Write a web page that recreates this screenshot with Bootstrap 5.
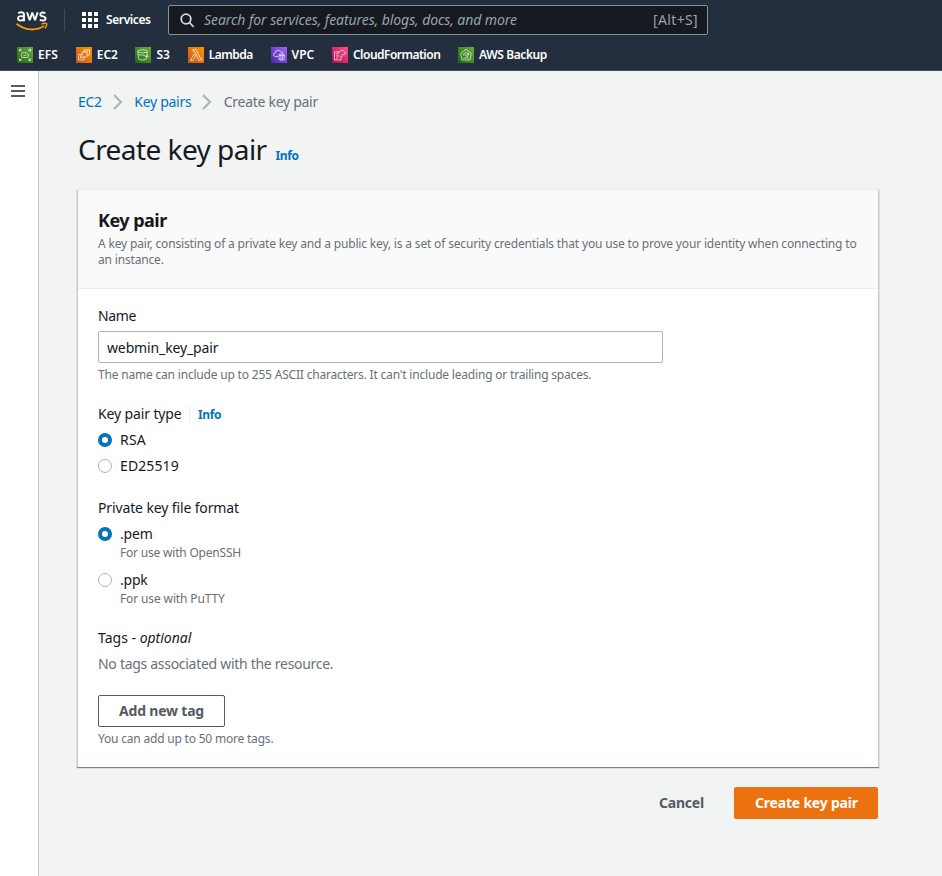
<!DOCTYPE html>
<html lang="en">
<head>
<meta charset="utf-8">
<meta name="viewport" content="width=device-width, initial-scale=1">
<title>Create key pair</title>
<link href="https://cdn.jsdelivr.net/npm/bootstrap@5.3.0/dist/css/bootstrap.min.css" rel="stylesheet">
<style>
body{font-family:"Noto Sans","Open Sans",sans-serif;font-size:14px;line-height:22px;color:#16191f;background:#f2f3f3;min-height:876px;overflow:hidden}
a{color:#0073bb;text-decoration:none}
.t{white-space:nowrap}
/* tracking */
.k1{letter-spacing:-.13px}
.k2{letter-spacing:-.2px}
.k3{letter-spacing:-.29px}
.k4{letter-spacing:-.4px}
.k5{letter-spacing:-.52px}
.w1{letter-spacing:.1px}
.w2{letter-spacing:.2px}
.intro{letter-spacing:-.168px}
.hint{letter-spacing:-.192px}
/* top bar */
.topbar{background:#232f3e;height:71px;border-bottom:1px solid #414d5c;color:#fff}
.toprow{height:40px;padding-left:16px}
.vrule{width:1px;height:22px;background:#414d5c;margin:0 17px 0 16px}
.svc{font-size:12px;font-weight:600;width:45px}
.search{width:540px;height:30px;background:#161920;border:1px solid #879596;border-radius:2px;color:#95a5a6;margin-left:17px;padding:0 9px 0 11px}
.search em{margin-left:9px;letter-spacing:-.073px}
.search .keys{letter-spacing:.35px}
.favs{height:30px;padding-left:17px;gap:17.800px;font-size:12px;font-weight:600}
.favs a{color:#fff;line-height:16px}
.favs svg{width:16px;height:16px;margin-right:5px;flex:none;fill:none;stroke:#fff;stroke-width:.8;stroke-opacity:.85}
.g-green{background:linear-gradient(45deg,#1b660f,#6cae3e)}
.g-orange{background:linear-gradient(45deg,#c8511b,#f90)}
.g-purple{background:linear-gradient(45deg,#4d27aa,#a166ff)}
.g-pink{background:linear-gradient(45deg,#b0084d,#ff4f8b)}
/* page */
.side{width:39px;border-right:1px solid #c3c8c8;background:#fff;height:805px;padding:14px 0 0 11px}
.side svg{display:block}
.content{width:839px;padding:20px 0 0 39px}
.crumbs svg{margin:0 11.500px 0 11px}
.muted{color:#687078}
.title-row{margin-top:19px}
h1{font-size:28px;line-height:34px;padding-bottom:2px;font-weight:400;margin:0;letter-spacing:-.55px}
h2{font-size:18px;line-height:22px;font-weight:700;margin:0 0 5px}
.small-t{font-size:12px;line-height:16px;color:#687078}
.info{font-size:12px;line-height:16px;font-weight:700}
.title-row .info{margin:0 0 4px 9px}
.panel{margin:21px -1px 0;background:#fff;border-left:1px solid #c8cccc;border-right:1px solid #c8cccc;border-top:1px solid #eaeded;box-shadow:0 1px 1px 0 #78818a;height:578px}
.panel-head{background:#fafafa;border-bottom:1px solid #eaeded;height:99px;padding:19px 20px 0}
.panel-body{padding:16px 20px 0}
.form-control.name-in{width:565px;height:32px;border:1px solid #aab7b8;border-radius:2px;padding:4px 8px;margin:4px 0;font-size:14px;line-height:22px;color:#16191f}
.group{margin-bottom:20px}
.pick{margin-top:4px}
.form-check-input.rad{width:14px;height:14px;margin:4px 8px 0 0;border:1px solid #aab7b8;flex:none;float:none;background:#fff}
.form-check-input.rad:checked{border:4px solid #0073bb}
.type-info{border-left:1px solid #eaeded;padding:2px 0 0 8px;margin:2px 0 2px 7.500px}
.btn.b{height:32px;border-radius:2px;font-size:14px;font-weight:700;line-height:20px;padding:5px 20px;color:#545b64}
.btn.b-line{border:1px solid #545b64;background:#fff;width:127px;margin:20px 0 4px;display:block}
.btn.b-main{background:#ec7211;border:1px solid #ec7211;color:#fff;width:144px}
.actions{margin-top:20px;gap:10px}
</style>
</head>
<body>
<header class="topbar">
  <div class="toprow d-flex align-items-center">
    <svg width="32" height="21" viewBox="0 0 32 21" fill="none"><g stroke="#fff" stroke-width="1.900"><path d="M2.200 3.300C4.500 1.800 8 1.800 8 4.600V11.200M8 6.500C4.500 5.700 2 6.200 2 8.500C2 11.400 6.900 11.200 8 8.300"/><path d="M11 2.200L13.700 10.300L16.300 2.500L19 10.300L21.700 2.200" stroke-linejoin="bevel"/><path d="M29.300 3.100C26.500 1.900 24.300 2.500 24.300 4.400C24.300 7 29.600 5.800 29.600 8.400C29.600 10.800 26.500 11 23.800 9.800"/></g><path d="M.5 13.800C9 21 20.500 20.800 28 16" stroke="#f90" stroke-width="1.900"/><path d="M25.500 13.900C30 13 31 13.200 30.700 14.500C30.500 16 29.900 17.200 29 18.300" stroke="#f90" stroke-width="1.500"/></svg>
    <span class="vrule"></span>
    <a class="d-flex align-items-center text-white" href="#"><svg class="me-2" width="16" height="16" fill="#fff"><path d="M0 0h4v4H0zM6 0h4v4H6zM12 0h4v4h-4zM0 6h4v4H0zM6 6h4v4H6zM12 6h4v4h-4zM0 12h4v4H0zM6 12h4v4H6zM12 12h4v4h-4z"/></svg><span class="t svc k4">Services</span></a>
    <div class="search d-flex align-items-center">
      <svg width="15" height="15" viewBox="0 0 15 15" fill="none" stroke="#d5dbdb" stroke-width="1.800"><circle cx="6" cy="6" r="4.800"/><path d="M9.500 9.500L13.700 14"/></svg>
      <em class="t">Search for services, features, blogs, docs, and more</em>
      <span class="t keys ms-auto">[Alt+S]</span>
    </div>
  </div>
  <nav class="favs d-flex align-items-center">
    <a class="d-flex" href="#"><svg class="g-green" viewBox="0 0 16 16"><path d="M5 6.200Q6 4.800 7.500 5.600Q9.500 5 10 6.800Q12 7 11.500 9Q11 10.500 9 10.500H6Q4 10.300 4.300 8.300Q4.300 7 5 6.200ZM6.500 8.300h3M2.500 4.500v-2h2M2.500 2.500l2.300 2.300M11.500 2.500h2v2M13.500 2.500l-2.300 2.300M2.500 11.500v2h2M2.500 13.500l2.300-2.300M13.500 11.500v2h-2M13.500 13.500l-2.300-2.300"/></svg><span class="t w1">EFS</span></a>
    <a class="d-flex" href="#"><svg class="g-orange" viewBox="0 0 16 16"><rect x="6" y="5" width="5" height="5" rx=".6"/><path d="M8 5V3h5.500v5H11M6 7.500H2.500V13H8V10M4.500 8.500v2.300h2M11.500 5.200v-.6H10"/></svg><span class="t k1">EC2</span></a>
    <a class="d-flex" href="#"><svg class="g-green" viewBox="0 0 16 16"><ellipse cx="7.500" cy="4.300" rx="4.800" ry="1.500"/><path d="M2.700 4.500L3.800 12.200Q7.500 14 11.200 12.200L12.300 4.500M7.300 7.800L12 9.800Q13.800 10 13 9L11.800 8.200M3.300 7.500Q6 8.500 7.300 7.800"/></svg><span class="t">S3</span></a>
    <a class="d-flex" href="#"><svg class="g-orange" viewBox="0 0 16 16"><path d="M5 2.500h3.200l4.100 8.800 1-.4.600 1.800-2.800.9L7.300 5.500 6.800 4.300H5zM6.200 6.700L2.500 13.500h2.600L7.600 9z"/></svg><span class="t k5">Lambda</span></a>
    <a class="d-flex" href="#"><svg class="g-purple" viewBox="0 0 16 16"><path d="M7 9.500H4Q2.300 9 2.600 7.200Q3 6 4.300 6Q4.300 3.500 6.800 3.200Q8.800 3.200 9.500 4.800Q11.800 4.500 12 6.500M8 7.800Q10.600 6 13.200 7.800V12.500Q10.600 14 8 12.500ZM9.800 8v5M11.500 8v5M8 8.200h5"/></svg><span class="t">VPC</span></a>
    <a class="d-flex" href="#"><svg class="g-pink" viewBox="0 0 16 16"><path d="M9 9V13H2.500V5H7M4 7h2.500M4 9h3.500M4 11h2.500M8 4.800Q8.500 3 10.300 3.200Q11.600 3.400 12 4.700Q13.600 5 13.500 6.300Q13.300 7.800 11.800 7.800H9M7 6.300v-2M10.500 9.800h-1"/></svg><span class="t k5">CloudFormation</span></a>
    <a class="d-flex" href="#"><svg class="g-green" viewBox="0 0 16 16"><path d="M8 2.300L13.300 6.500L12 13H4L2.700 6.500ZM5.300 11h5.400M5.500 8.500Q5 5.800 8 5.800Q10 5.800 10.500 7.500M10.700 5.800v1.900H9M10.500 8.200Q10.300 10 8 10M6.500 8.200h2.500"/></svg><span class="t k4">AWS Backup</span></a>
  </nav>
</header>
<div class="d-flex">
  <aside class="side"><svg width="14" height="12" fill="#545b64"><path d="M0 0h14v2H0zM0 5h14v2H0zM0 10h14v2H0z"/></svg></aside>
  <main class="content">
    <nav class="crumbs d-flex align-items-center">
      <a class="t k3" href="#">EC2</a>
      <svg width="10" height="16" fill="none" stroke="#aab7b8" stroke-width="2.200"><path d="M1 1l7 7-7 7"/></svg>
      <a class="t k3" href="#">Key pairs</a>
      <svg width="10" height="16" fill="none" stroke="#aab7b8" stroke-width="2.200"><path d="M1 1l7 7-7 7"/></svg>
      <span class="t k3 muted">Create key pair</span>
    </nav>
    <div class="title-row d-flex align-items-end"><h1 class="t">Create key pair</h1><a class="info t k4" href="#">Info</a></div>
    <section class="panel">
      <div class="panel-head">
        <h2 class="t k5">Key pair</h2>
        <div class="small-t t intro">A key pair, consisting of a private key and a public key, is a set of security credentials that you use to prove your identity when connecting to<br>an instance.</div>
      </div>
      <div class="panel-body">
        <div class="group">
          <label class="t k4 d-block" for="kp-name">Name</label>
          <input id="kp-name" class="form-control name-in k1" type="text" value="webmin_key_pair">
          <div class="small-t t hint">The name can include up to 255 ASCII characters. It can't include leading or trailing spaces.</div>
        </div>
        <div class="group">
          <div class="d-flex"><span class="t k1">Key pair type</span><a class="info type-info t k4" href="#">Info</a></div>
          <label class="pick d-flex"><input class="form-check-input rad" type="radio" name="type" checked><span class="t w2">RSA</span></label>
          <label class="pick d-flex"><input class="form-check-input rad" type="radio" name="type"><span class="t w1">ED25519</span></label>
        </div>
        <div class="group">
          <div class="t k1">Private key file format</div>
          <label class="pick d-flex"><input class="form-check-input rad" type="radio" name="format" checked><span><span class="t k2 d-block">.pem</span><span class="small-t t k2 d-block">For use with OpenSSH</span></span></label>
          <label class="pick d-flex mt-2"><input class="form-check-input rad" type="radio" name="format"><span><span class="t k2 d-block">.ppk</span><span class="small-t t k1 d-block">For use with PuTTY</span></span></label>
        </div>
        <div class="t">Tags - <em>optional</em></div>
        <div class="t k3 muted mt-1">No tags associated with the resource.</div>
        <button class="btn b b-line t k2" type="button">Add new tag</button>
        <div class="small-t t k2">You can add up to 50 more tags.</div>
      </div>
    </section>
    <div class="actions d-flex justify-content-end">
      <button class="btn b border-0 t k2" type="button">Cancel</button>
      <button class="btn b b-main t k2" type="button">Create key pair</button>
    </div>
  </main>
</div>
<script src="https://cdn.jsdelivr.net/npm/bootstrap@5.3.0/dist/js/bootstrap.bundle.min.js"></script>
</body>
</html>
